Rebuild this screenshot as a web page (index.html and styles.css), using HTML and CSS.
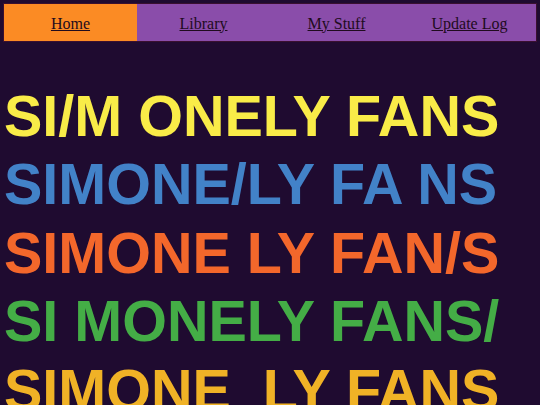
FILE: index.html
```html
<!DOCTYPE html>
<html>
<head>
<meta charset="utf-8">
<link rel="stylesheet" href="styles.css">
</head>
<body>
<nav class="nav">
  <a class="nav-item active" href="#">Home</a>
  <a class="nav-item" href="#">Library</a>
  <a class="nav-item" href="#">My Stuff</a>
  <a class="nav-item" href="#">Update Log</a>
</nav>
<main class="title">
  <p class="line yellow">SI/M ONELY FANS</p>
  <p class="line blue">SIMONE/LY FA NS</p>
  <p class="line orange">SIMONE LY FAN/S</p>
  <p class="line green">SI MONELY FANS/</p>
  <p class="line gold">SIMONE&nbsp; LY FANS</p>
</main>
</body>
</html>
```
FILE: styles.css
```css
html, body {
  margin: 0;
  padding: 0;
}
body {
  background: #1f0b30;
  padding: 3px;
  overflow: hidden;
  height: 405px;
  box-sizing: border-box;
}
.nav {
  display: grid;
  grid-template-columns: repeat(4, 1fr);
  background: #8a4daa;
  border: 1px solid #3a1030;
  height: 39px;
  box-sizing: border-box;
}
.nav-item {
  display: flex;
  align-items: center;
  justify-content: center;
  padding-top: 2px;
  font-family: "Liberation Serif", serif;
  font-size: 16px;
  color: #1f0b1e;
  text-decoration: underline;
}
.nav-item.active {
  background: #fb8b24;
}
.title {
  margin-top: 40px;
}
.line {
  margin: 0;
  font-family: "Liberation Sans", Arial, sans-serif;
  font-weight: bold;
  font-size: 57.5px;
  line-height: 68.4px;
  white-space: nowrap;
  padding-left: 1px;
}
.yellow { color: #f9ec48; }
.blue { color: #4282c8; }
.orange { color: #f3672b; }
.green { color: #44ad46; }
.gold { color: #f0b226; }
```
